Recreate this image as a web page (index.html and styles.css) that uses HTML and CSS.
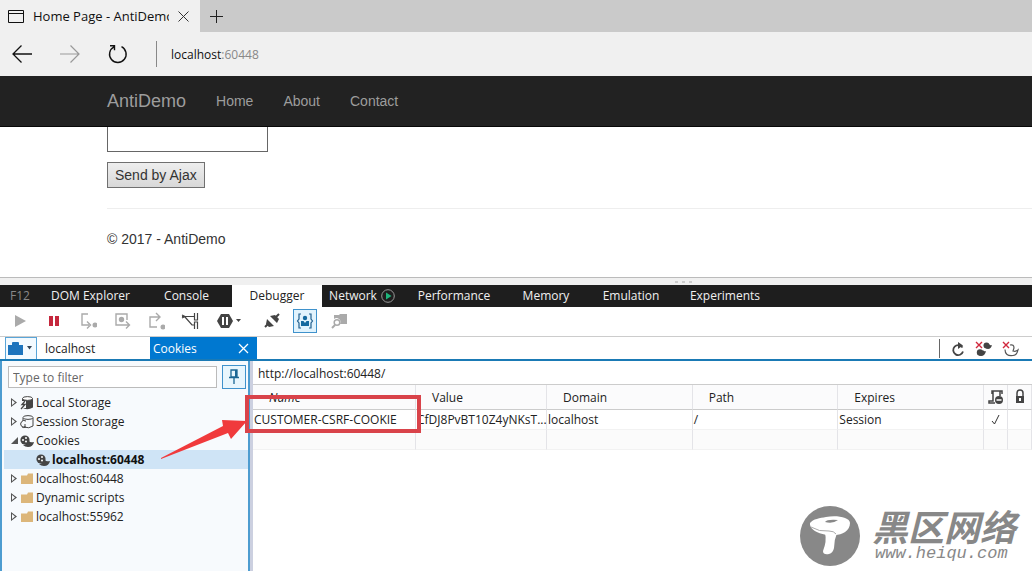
FILE: index.html
```
<!DOCTYPE html>
<html lang="en">
<head>
    <meta charset="UTF-8">
    <meta name="viewport" content="width=device-width, initial-scale=1.0">
    <title>Home Page - AntiDemo</title>
    <link rel="stylesheet" href="styles.css">
</head>
<body>
    <div class="tab-strip">
        <div class="browser-tab">
            <svg width="16" height="13" viewBox="0 0 16 13" fill="none" stroke="#111"><path d="M.5.5h15v12H.5zM.5 3.5h15"/></svg>
            <span class="tab-title">Home Page - AntiDemo</span>
            <button class="plain" aria-label="Close tab"><svg width="11" height="11" viewBox="0 0 11 11" stroke="#333"><path d="M.5.5l10 10M10.500.5l-10 10"/></svg></button>
        </div>
        <button class="plain new-tab" aria-label="New tab"><svg width="13" height="13" viewBox="0 0 13 13" stroke="#222"><path d="M6.500 0v13M0 6.500h13"/></svg></button>
    </div>
    <div class="address-bar">
        <button class="plain nav-btn" aria-label="Back"><svg width="20" height="18" viewBox="0 0 20 18" fill="none" stroke="#111" stroke-width="1.300"><path d="M20 9H1M9.500.5L1 9l8.500 8.500"/></svg></button>
        <button class="plain nav-btn" aria-label="Forward"><svg width="20" height="18" viewBox="0 0 20 18" fill="none" stroke="#999" stroke-width="1.200"><path d="M0 9h19M10.500.5L19 9l-8.500 8.500"/></svg></button>
        <button class="plain nav-btn" aria-label="Refresh"><svg width="20" height="20" viewBox="0 0 20 20" fill="none" stroke="#111" stroke-width="1.400"><path d="M13.500 2.700A8.300 8.300 0 1 1 6 2.800M2 1.700h4.500v4.500"/></svg></button>
        <span class="divider"></span>
        <span class="url">localhost<span class="port">:60448</span></span>
    </div>

    <nav class="navbar">
        <a class="brand" href="#">AntiDemo</a>
        <a href="#">Home</a>
        <a href="#">About</a>
        <a href="#">Contact</a>
    </nav>
    <main class="page">
        <input class="page-input" type="text" aria-label="Value">
        <button class="page-button">Send by Ajax</button>
        <hr>
        <footer>&copy; 2017 - AntiDemo</footer>
    </main>

    <div class="splitter"><i></i><i></i><i></i></div>

    <section class="devtools">
        <div class="tool-tabs">
            <button class="f12">F12</button>
            <button>DOM Explorer</button>
            <button>Console</button>
            <button class="active">Debugger</button>
            <button>Network <svg width="14" height="14" viewBox="0 0 14 14"><circle cx="7" cy="7" r="6.300" fill="none" stroke="#999"/><path d="M5 3.500v7L10.500 7z" fill="#1fb57c"/></svg></button>
            <button>Performance</button>
            <button>Memory</button>
            <button>Emulation</button>
            <button>Experiments</button>
        </div>

        <div class="toolbar">
            <button aria-label="Continue"><svg width="18" height="18" viewBox="0 0 18 18"><path d="M4 3v12l11-6z" fill="#aaa"/></svg></button>
            <button aria-label="Break"><svg width="18" height="18" viewBox="0 0 18 18"><path d="M4 4h4v10H4zM10 4h4v10h-4z" fill="#c5283d"/></svg></button>
            <button aria-label="Step into"><svg width="18" height="18" viewBox="0 0 18 18" fill="none" stroke="#aaa" stroke-width="1.400"><path d="M9 2H3v11h7M8 9.500l3.500 3.500L8 16.500"/><circle cx="16" cy="13" r="1.800" fill="#aaa"/></svg></button>
            <button aria-label="Step over"><svg width="18" height="18" viewBox="0 0 18 18" fill="none" stroke="#aaa" stroke-width="1.400"><path d="M14 8V2H3v11h13M13 9.500l3.500 3.500-3.500 3.500"/><circle cx="8.500" cy="7.500" r="2" fill="#aaa"/></svg></button>
            <button aria-label="Step out"><svg width="18" height="18" viewBox="0 0 18 18" fill="none" stroke="#aaa" stroke-width="1.400"><path d="M10 15H3V5h9M9 1l4 4-4 4"/><circle cx="16" cy="15" r="1.800" fill="#aaa"/></svg></button>
            <button aria-label="Break on new worker"><svg width="18" height="18" viewBox="0 0 18 18" fill="none" stroke="#444" stroke-width="1.200"><path d="M1 4.500h12M4 5l7 8h2M1 3l3 1.500L1 6M13.500 1v7h3V1M13.500 17v-7h3v7"/></svg></button>
            <button class="wide" aria-label="Exception control"><svg width="26" height="18" viewBox="0 0 26 18"><path d="M5 2h8l4 7-4 7H5L1 9z" fill="#444"/><path d="M6 5h2v8H6zM10 5h2v8h-2z" fill="#fff"/><path d="M20 7h5l-2.500 3z" fill="#444"/></svg></button>
            <button class="wide" aria-label="Disconnect debugger"><svg width="18" height="18" viewBox="0 0 18 18"><path d="M2 15l3-3M13 5l3-3" stroke="#444" stroke-width="2"/><path d="M4 7l7 7-5 1-3-3zM7 4l5-1 4 4-2 4z" fill="#444"/></svg></button>
            <button class="pressed" aria-label="Just my code"><svg width="18" height="18" viewBox="0 0 18 18"><path d="M5 2H3v5L1.500 9 3 11v5h2M13 2h2v5l1.500 2-1.500 2v5h-2" fill="none" stroke="#22608f" stroke-width="1.200"/><circle cx="9" cy="6" r="2.200" fill="#14699f"/><path d="M5 9h2.500L9 11l1.500-2H13v5H5z" fill="#14699f"/></svg></button>
            <button aria-label="Find source"><svg width="18" height="18" viewBox="0 0 18 18"><path d="M3 3h5l1-1h7v10H9a4 4 0 0 0-6-5z" fill="#aaa"/><path d="M1 16l3-3" stroke="#aaa" stroke-width="2"/><circle cx="6" cy="10.500" r="2.800" fill="#fff" stroke="#aaa" stroke-width="1.500"/></svg></button>
        </div>

        <div class="file-bar">
            <button class="folder-btn" aria-label="Open document"><svg width="26" height="16" viewBox="0 0 26 16"><path d="M0 4h4V2q0-1 1-1h5q1 0 1 1v2h4v10H0z" fill="#1d74bd"/><path d="M19 5h5l-2.500 3.500z" fill="#345"/></svg></button>
            <button class="file-tab">localhost</button>
            <button class="file-tab current">Cookies <svg width="11" height="11" viewBox="0 0 11 11" stroke="#fff" stroke-width="1.300"><path d="M1 1l9 9M10 1l-9 9"/></svg></button>
            <div class="file-actions">
                <button aria-label="Refresh"><svg width="16" height="16" viewBox="0 0 16 16"><path d="M12.500 5.500A5 5 0 1 0 13 9.500M8.500 3.500h2" transform="translate(0 1)" fill="none" stroke="#444" stroke-width="1.800"/><path d="M8 1l5 3.500L8 8z" fill="#444"/></svg></button>
                <button aria-label="Clear cookies"><svg width="18" height="16" viewBox="0 0 18 16"><path d="M10 6q3 0 4-3 1 2 3 1-1 4-4 4-2 0-3-2zM3 13q3 0 5-4 1 2 3 1-1 5-5 5-2 0-3-2z" fill="#444"/><circle cx="11.500" cy="4.500" r="3" fill="#444"/><circle cx="5" cy="11.500" r="3.200" fill="#444"/><path d="M1 1l6 6M7 1L1 7" stroke="#d0283d" stroke-width="1.400"/></svg></button>
                <button aria-label="Clear session cookies"><svg width="18" height="16" viewBox="0 0 18 16" fill="none"><path d="M8 4q4-1 4 3l-1 3q3 1 5-1-1 5-5 5.500-8 1-8-6" stroke="#555" stroke-width="1.200"/><path d="M1 1l6 6M7 1L1 7" stroke="#d0283d" stroke-width="1.400"/></svg></button>
            </div>
        </div>

        <div class="panes">
            <aside class="sidebar">
                <div class="filter-row">
                    <input type="text" placeholder="Type to filter" aria-label="Type to filter">
                    <button class="pin" aria-label="Pin"><svg width="12" height="16" viewBox="0 0 12 16"><path d="M3 1h6v7H3zM1 8.500h10M6 9v6" fill="none" stroke="#1b6794" stroke-width="1.300"/><path d="M7 1h2v7H7z" fill="#1b6794"/></svg></button>
                </div>
                <ul class="tree">
                    <li><span class="arrow"></span><svg width="14" height="14" viewBox="0 0 14 14"><path d="M2 2.500v9q5 3.500 11 0v-9z" fill="#444"/><ellipse cx="7.500" cy="2.500" rx="5" ry="1.900" fill="#fff" stroke="#444"/><path d="M0 5h6v7H0z" fill="#f7fafd"/><path d="M5 5L2 8.500h3L1 13" fill="none" stroke="#444" stroke-width="1.300"/></svg>Local Storage</li>
                    <li><span class="arrow"></span><svg width="14" height="14" viewBox="0 0 14 14" fill="none" stroke="#444"><ellipse cx="8" cy="2.500" rx="5" ry="1.900"/><path d="M3 3v3M13 3v8q-4 3-9 1M6 6a3.500 3.500 0 1 0 0 6M5 9v3H2"/></svg>Session Storage</li>
                    <li><span class="arrow open"></span><svg width="14" height="14" viewBox="0 0 14 14"><use href="#cookie"/></svg>Cookies</li>
                    <li class="child selected"><svg width="14" height="14" viewBox="0 0 14 14"><g id="cookie"><circle cx="5" cy="6" r="4.600" fill="#444"/><path d="M3 11q3 0 6-4 1 2 5 1-1 5-6 5-3 0-5-2z" fill="#444"/><g fill="#fff"><circle cx="3" cy="6" r="1"/><circle cx="6" cy="4" r="1"/><circle cx="6" cy="7.500" r="1"/></g></g></svg>localhost:60448</li>
                    <li><span class="arrow"></span><svg width="14" height="14" viewBox="0 0 14 14"><path id="folder" d="M1 3.500h6l1-2h5V12H1z" fill="#dcb67a"/></svg>localhost:60448</li>
                    <li><span class="arrow"></span><svg width="14" height="14" viewBox="0 0 14 14"><use href="#folder"/></svg>Dynamic scripts</li>
                    <li><span class="arrow"></span><svg width="14" height="14" viewBox="0 0 14 14"><use href="#folder"/></svg>localhost:55962</li>
                </ul>
            </aside>
            <div class="content">
                <div class="location">http://localhost:60448/</div>
                <table>
                    <colgroup>
                        <col class="col-name"><col class="col-value"><col><col><col><col class="col-icon"><col class="col-icon">
                    </colgroup>
                    <thead>
                        <tr>
                            <th class="sorted">Name</th>
                            <th>Value</th>
                            <th>Domain</th>
                            <th>Path</th>
                            <th>Expires</th>
                            <th class="icon-cell"><svg width="16" height="16" viewBox="0 0 16 16"><path d="M4 5V2h10v3M5 2v10H1v2h6M12 2v5" fill="none" stroke="#444" stroke-width="1.500"/><circle cx="11" cy="11" r="4" fill="#444"/><path d="M8.500 11h5" stroke="#fff" stroke-width="1.500"/></svg></th>
                            <th class="icon-cell"><svg width="12" height="16" viewBox="0 0 12 16"><path d="M3 7V4a3 3 0 0 1 6 0v3" fill="none" stroke="#444" stroke-width="1.500"/><path d="M2 7h8v7H2z" fill="#444"/><path d="M5 9h2v3H5z" fill="#fff"/></svg></th>
                        </tr>
                    </thead>
                    <tbody>
                        <tr>
                            <td>CUSTOMER-CSRF-COOKIE</td>
                            <td>CfDJ8PvBT10Z4yNKsT...</td>
                            <td>localhost</td>
                            <td>/</td>
                            <td>Session</td>
                            <td class="icon-cell"><svg width="10" height="10" viewBox="0 0 10 10" fill="none" stroke="#333"><path d="M1 6l2.500 3L8 0"/></svg></td>
                            <td></td>
                        </tr>
                        <tr class="empty"><td></td><td></td><td></td><td></td><td></td><td></td><td></td></tr>
                    </tbody>
                </table>
            </div>
            <div class="highlight"></div>
            <svg class="pointer" width="88" height="42" viewBox="0 0 88 42"><path d="M0 38L62 6l-1-6 25 1-16 18-3-6L0 39z" fill="#f03a3c"/></svg>
        </div>
    </section>

    <div class="watermark">
        <svg width="60" height="60" viewBox="0 0 60 60"><circle cx="30" cy="30" r="30" fill="#888"/><path d="M25 27q2 8-2 18 0 4 6 3 4-1 5-6 0-8 3-15z" fill="#fff"/><path d="M10 17c3-4 10-5 16-6 10-2 24 0 24 6 0 8-8 12-15 12-12 1-26-4-25-12z" fill="#fff"/><path d="M11 21q8 5 18 4 5 0 7 3" fill="none" stroke="#aaa"/><path d="M25 16q2-3 13-2-5 4-13 2z" fill="#888"/></svg>
        <div class="watermark-text">
            <div class="watermark-name" lang="zh">黑区网络</div>
            <div class="watermark-url">www.heiqu.com</div>
        </div>
    </div>
</body>
</html>
```
FILE: styles.css
```
* {
    box-sizing: border-box;
}
body {
    margin: 0;
    height: 100vh;
    display: flex;
    flex-direction: column;
    position: relative;
    overflow: hidden;
    background-color: white;
    color: #222;
    font-family: "Open Sans", "Noto Sans", sans-serif;
    font-size: 12px;
}
button, input {
    font: inherit;
    color: inherit;
}
button {
    padding: 0;
    border: none;
    background: none;
}
svg {
    display: block;
    flex: none;
}
.plain {
    display: flex;
    align-items: center;
    justify-content: center;
}

/* browser chrome */
.tab-strip {
    display: flex;
    flex: none;
    height: 32px;
    background-color: #cacaca;
}
.browser-tab {
    display: flex;
    align-items: center;
    width: 200px;
    padding: 0 11px 0 8px;
    gap: 9px;
    background-color: #f0f0f0;
    color: #111;
}
.tab-title {
    flex: 1;
    overflow: hidden;
    font-size: 13px;
    white-space: nowrap;
}
.new-tab {
    width: 33px;
}
.address-bar {
    display: flex;
    align-items: center;
    flex: none;
    height: 44px;
    padding-left: 12px;
    background-color: #f0f0f0;
}
.nav-btn {
    width: 20px;
    margin-right: 28px;
}
.divider {
    width: 1px;
    height: 26px;
    margin-right: 14px;
    background-color: #888;
}
.url {
    color: #111;
}
.port {
    color: #888;
}

/* web page */
.navbar {
    display: flex;
    align-items: center;
    flex: none;
    height: 51px;
    gap: 30px;
    padding-left: 107px;
    background-color: #222;
    border-bottom: 1px solid #080808;
    font-family: "Liberation Sans", Arial, sans-serif;
    font-size: 14px;
}
.navbar a {
    color: #9d9d9d;
    text-decoration: none;
}
.navbar .brand {
    font-size: 18px;
}
.page {
    flex: none;
    height: 150px;
    padding-left: 107px;
    color: #333;
    font-family: "Liberation Sans", Arial, sans-serif;
    font-size: 14px;
}
.page-input {
    display: block;
    width: 161px;
    height: 25px;
    border: 1px solid #666;
    border-top: none;
}
.page-button {
    display: block;
    height: 26px;
    margin-top: 10px;
    padding: 0 7px;
    border: 1px solid #707070;
    background: linear-gradient(#eee, #d8d8d8);
}
.page hr {
    margin: 20px 0;
    border: none;
    border-top: 1px solid #eee;
}
.page footer {
    line-height: 20px;
}
.splitter {
    display: flex;
    justify-content: center;
    align-items: center;
    gap: 4px;
    flex: none;
    height: 8px;
    padding-left: 334px;
    background-color: #f0f0f0;
    border-top: 1px solid #bbb;
}
.splitter i {
    width: 3px;
    height: 2px;
    background-color: #ccc;
}

/* developer tools */
.devtools {
    display: flex;
    flex-direction: column;
    flex: 1;
    min-height: 0;
}
.tool-tabs {
    display: grid;
    grid-template-columns: 40px 101px 91px 90px 80px 104px 80px 90px 98px;
    flex: none;
    height: 22px;
    background-color: #1e1e1e;
}
.tool-tabs button {
    display: flex;
    align-items: center;
    justify-content: center;
    gap: 4px;
    padding-bottom: 1px;
    color: #f0f0f0;
    white-space: nowrap;
}
.tool-tabs .f12 {
    color: #888;
}
.tool-tabs .active {
    background-color: white;
    color: #222;
}
.toolbar {
    display: flex;
    align-items: center;
    flex: none;
    height: 30px;
    padding: 0 0 2px 3px;
    border-bottom: 1px solid #ccc;
}
.toolbar button {
    display: flex;
    align-items: center;
    justify-content: center;
    width: 34px;
    height: 24px;
}
.toolbar .wide {
    width: 43px;
}
.toolbar .wide + .pressed {
    width: 24px;
    margin-right: 6px;
    border: 1px solid #3f92cc;
    background-color: #e1f3fd;
}
.file-bar {
    display: flex;
    flex: none;
    height: 24px;
    padding-left: 5px;
    border-bottom: 2px solid #1a7ab5;
}
.folder-btn {
    width: 32px;
    padding-left: 2px;
    border: 1px solid #5aa5d8;
    border-bottom: none;
    background-color: #f3faff;
}
.file-tab {
    width: 113px;
    padding: 0 8px;
    text-align: left;
}
.file-tab.current {
    display: flex;
    align-items: center;
    justify-content: space-between;
    width: 107px;
    padding: 0 8px 0 3px;
    background-color: #0078d0;
    color: white;
}
.file-actions {
    display: flex;
    gap: 9px;
    height: 19px;
    margin: 2px 12px 0 auto;
    padding-left: 10px;
    border-left: 1px solid #666;
}
.panes {
    display: flex;
    flex: 1;
    min-height: 0;
    position: relative;
}
.sidebar {
    flex: none;
    width: 253px;
    padding: 4px 2px 0;
    background-color: #f7fafd;
    border-left: 2px solid #4d9cd0;
    border-right: 3px solid #ccd0e0;
    box-shadow: inset -2px 0 #4d9cd0;
}
.filter-row {
    display: flex;
    align-items: center;
    gap: 5px;
    padding: 0 2px 0 4px;
}
.filter-row input {
    flex: 1;
    min-width: 0;
    height: 22px;
    padding: 0 4px;
    border: 1px solid #bbb;
    background-color: white;
}
.filter-row input::placeholder {
    color: #666;
}
.pin {
    display: flex;
    align-items: center;
    justify-content: center;
    width: 24px;
    height: 24px;
    border: 1px solid #3f92cc;
    background-color: #e8f6fd;
}
.tree {
    margin: 4px 0 0;
    padding: 0;
    list-style: none;
}
.tree li {
    display: flex;
    align-items: center;
    gap: 2px;
    height: 19px;
    padding-left: 7px;
}
.tree .child {
    padding-left: 32px;
}
.tree .selected {
    background-color: #cfe4f6;
    color: #111;
    font-weight: bold;
}
/* hollow triangle, solid when the node is open */
.arrow {
    width: 7px;
    height: 9px;
    background-color: #555;
    clip-path: polygon(evenodd, 0 0, 6px 50%, 0 100%, 0 0, 1px 2px, 1px 7px, 4px 50%, 1px 2px, 0 0);
}
.arrow.open {
    height: 7px;
    clip-path: polygon(100% 0, 100% 100%, 0 100%);
}
.content {
    flex: 1;
    min-width: 0;
}
.location {
    height: 23px;
    padding-left: 5px;
    line-height: 25px;
}
table {
    width: 100%;
    table-layout: fixed;
    border-collapse: separate;
    border-spacing: 0;
    border-top: 1px solid #ccc;
}
.col-name {
    width: 163px;
}
.col-value {
    width: 131px;
}
.col-icon {
    width: 24px;
}
th, td {
    padding: 0 0 0 1px;
    border-right: 1px solid #e4e4e8;
    text-align: left;
    white-space: nowrap;
}
th {
    height: 25px;
    padding-left: 16px;
    background-color: #fbfbfc;
    border-bottom: 1px solid #ccc;
    font-weight: normal;
}
th.sorted {
    font-style: italic;
}
td {
    height: 20px;
    border-bottom: 1px solid #f2f2f2;
}
.empty td {
    background-color: #fbfbfb;
}
.icon-cell {
    padding: 0;
}
.icon-cell svg {
    margin: 0 auto;
}

/* callout over the cookie name */
.highlight {
    position: absolute;
    left: 245px;
    top: 34px;
    width: 176px;
    height: 38px;
    border: 4px solid #d9434a;
}
.pointer {
    position: absolute;
    left: 161px;
    top: 59px;
}

.watermark {
    position: absolute;
    right: 16px;
    bottom: 5px;
    display: flex;
    align-items: center;
    gap: 12px;
    color: #888;
    white-space: nowrap;
}
.watermark-name {
    font-family: "Noto Sans CJK SC", sans-serif;
    font-size: 36px;
    font-style: italic;
    font-weight: bold;
    line-height: 36px;
}
.watermark-url {
    padding-left: 3px;
    font-family: "Liberation Mono", monospace;
    font-size: 17px;
    font-style: italic;
    line-height: 22px;
}
```
